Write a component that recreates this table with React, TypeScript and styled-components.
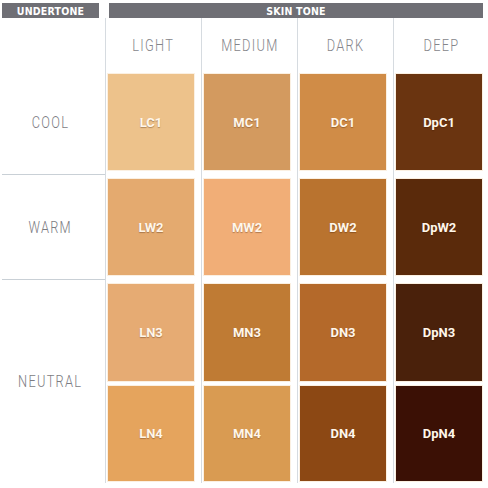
import React from 'react';
import styled, { createGlobalStyle } from 'styled-components';

const GlobalStyle = createGlobalStyle`
  html, body {
    margin: 0;
    padding: 0;
    background: #ffffff;
  }
  body {
    font-family: 'Liberation Sans', Arial, sans-serif;
  }
`;

const Page = styled.div`
  width: 488px;
  height: 488px;
  padding: 3px 0 0 2px;
  box-sizing: border-box;
  background: #ffffff;
  overflow: hidden;
`;

const BarRow = styled.div`
  display: grid;
  grid-template-columns: 97px 374px;
  column-gap: 10px;
  height: 15px;
`;

const Bar = styled.div`
  background: #6f6f75;
  color: #ffffff;
  font-family: 'DejaVu Sans Condensed', 'DejaVu Sans', sans-serif;
  font-weight: 700;
  font-size: 10.5px;
  letter-spacing: 0.2px;
  display: flex;
  align-items: center;
  justify-content: center;
`;

const Chart = styled.div`
  display: grid;
  grid-template-columns: 103px repeat(4, 96px);
  grid-template-rows: 52px 105px 105px 101px 102px;
`;

const Label = styled.span`
  display: inline-block;
  font-family: Roboto, 'DejaVu Sans', sans-serif;
  font-weight: 300;
  font-size: 16px;
  letter-spacing: 1.6px;
  transform: scaleX(0.8);
`;

const Heading = styled.div`
  border-left: 1px solid #d6dbe0;
  display: flex;
  align-items: center;
  justify-content: center;
  padding-top: 2px;
  color: #85858a;
`;

const Blank = styled.div``;

const Undertone = styled.div<{ $span?: number; $line?: boolean }>`
  grid-row: span ${p => p.$span ?? 1};
  border-bottom: ${p => (p.$line ? '1px solid #c9d0d6' : 'none')};
  display: flex;
  align-items: center;
  justify-content: center;
  padding-right: 6px;
  color: #7c7c82;
`;

const Cell = styled.div<{ $top: number }>`
  border-left: 1px solid #d6dbe0;
  padding: ${p => p.$top}px 0 0 2px;
  box-sizing: border-box;
`;

const Swatch = styled.div<{ $bg: string; $h: number }>`
  width: 86px;
  height: ${p => p.$h}px;
  background: ${p => p.$bg};
  box-shadow: 0 0 0 1px #fbf0e2;
  display: flex;
  align-items: center;
  justify-content: center;
  color: #fff6ea;
  font-family: Roboto, 'Liberation Sans', sans-serif;
  font-weight: 700;
  font-size: 13px;
  text-shadow: 0 1px 1px rgba(60, 25, 0, 0.35);
`;

const tones = ['LIGHT', 'MEDIUM', 'DARK', 'DEEP'];

const rows = [
  { top: 4, h: 96, items: [['LC1', '#edc28b'], ['MC1', '#d39a5f'], ['DC1', '#d08c47'], ['DpC1', '#6a3410']] },
  { top: 4, h: 96, items: [['LW2', '#e4aa6f'], ['MW2', '#f1ae77'], ['DW2', '#b9732f'], ['DpW2', '#5a2a0b']] },
  { top: 4, h: 97, items: [['LN3', '#e6ab73'], ['MN3', '#bf7b34'], ['DN3', '#b4692a'], ['DpN3', '#4a210b']] },
  { top: 5, h: 95, items: [['LN4', '#e5a45d'], ['MN4', '#d99b52'], ['DN4', '#8c4814'], ['DpN4', '#3b1005']] },
];

export default function App() {
  return (
    <Page>
      <GlobalStyle />
      <BarRow>
        <Bar>UNDERTONE</Bar>
        <Bar>SKIN TONE</Bar>
      </BarRow>
      <Chart>
        <Blank />
        {tones.map(t => (
          <Heading key={t}>
            <Label>{t}</Label>
          </Heading>
        ))}

        <Undertone $line>
          <Label>COOL</Label>
        </Undertone>
        {rows[0].items.map(([code, bg]) => (
          <Cell key={code} $top={rows[0].top}>
            <Swatch $bg={bg} $h={rows[0].h}>{code}</Swatch>
          </Cell>
        ))}

        <Undertone $line>
          <Label>WARM</Label>
        </Undertone>
        {rows[1].items.map(([code, bg]) => (
          <Cell key={code} $top={rows[1].top}>
            <Swatch $bg={bg} $h={rows[1].h}>{code}</Swatch>
          </Cell>
        ))}

        <Undertone $span={2}>
          <Label>NEUTRAL</Label>
        </Undertone>
        {rows[2].items.map(([code, bg]) => (
          <Cell key={code} $top={rows[2].top}>
            <Swatch $bg={bg} $h={rows[2].h}>{code}</Swatch>
          </Cell>
        ))}
        {rows[3].items.map(([code, bg]) => (
          <Cell key={code} $top={rows[3].top}>
            <Swatch $bg={bg} $h={rows[3].h}>{code}</Swatch>
          </Cell>
        ))}
      </Chart>
    </Page>
  );
}
